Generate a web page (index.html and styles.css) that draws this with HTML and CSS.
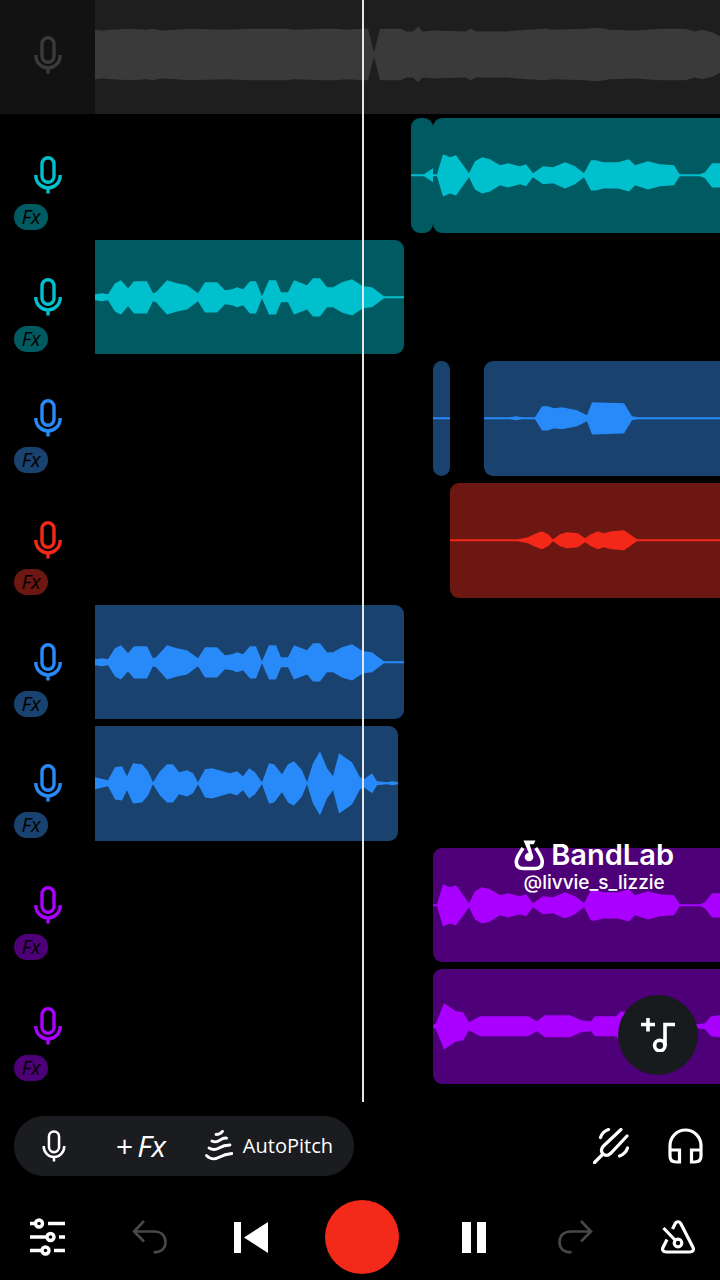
FILE: index.html
```html
<!DOCTYPE html>
<html lang="en">
<head>
    <meta charset="UTF-8">
    <meta name="viewport" content="width=device-width, initial-scale=1.0">
    <title>BandLab</title>
    <link rel="stylesheet" href="styles.css">
</head>
<body>
    <!-- Shared icons -->
    <svg class="icon-defs" width="0" height="0">
        <symbol id="mic" viewBox="0 0 28 38">
            <rect x="8" y="1.8" width="12" height="24.500" rx="6"/>
            <path d="M1.8 19v.5C1.8 27 8 32 14 32s12.2-5 12.2-12.5V19M14 32v5.5"/>
        </symbol>
        <symbol id="back" viewBox="0 0 35 34">
            <path d="M12 1 2 11.500l10 10M2 11.500h20c8 0 11.500 5 11.500 11 0 6-4.500 9.800-12 9.800"/>
        </symbol>
    </svg>

    <div class="studio">
        <main class="timeline">
            <div class="track muted">
                <div class="track-head">
                    <button class="mic-btn" aria-label="Track 1"><svg class="mic"><use href="#mic"/></svg></button>
                </div>
                <div class="lane">
                    <div class="clip backing"><svg data-wave="backing"></svg></div>
                </div>
            </div>

            <div class="tracks">
                <div class="track teal">
                    <div class="track-head">
                        <button class="mic-btn" aria-label="Track 2"><svg class="mic"><use href="#mic"/></svg></button>
                        <button class="fx-badge">Fx</button>
                    </div>
                    <div class="lane">
                        <div class="clip pickup"><svg data-wave="pickup"></svg></div>
                        <div class="clip chorus"><svg data-wave="chorus"></svg></div>
                    </div>
                </div>
                <div class="track teal">
                    <div class="track-head">
                        <button class="mic-btn" aria-label="Track 3"><svg class="mic"><use href="#mic"/></svg></button>
                        <button class="fx-badge">Fx</button>
                    </div>
                    <div class="lane">
                        <div class="clip verse"><svg data-wave="verse"></svg></div>
                    </div>
                </div>
                <div class="track blue">
                    <div class="track-head">
                        <button class="mic-btn" aria-label="Track 4"><svg class="mic"><use href="#mic"/></svg></button>
                        <button class="fx-badge">Fx</button>
                    </div>
                    <div class="lane">
                        <div class="clip sliver"><svg data-wave="sliver"></svg></div>
                        <div class="clip adlib"><svg data-wave="adlib"></svg></div>
                    </div>
                </div>
                <div class="track red">
                    <div class="track-head">
                        <button class="mic-btn" aria-label="Track 5"><svg class="mic"><use href="#mic"/></svg></button>
                        <button class="fx-badge">Fx</button>
                    </div>
                    <div class="lane">
                        <div class="clip whisper"><svg data-wave="whisper"></svg></div>
                    </div>
                </div>
                <div class="track blue">
                    <div class="track-head">
                        <button class="mic-btn" aria-label="Track 6"><svg class="mic"><use href="#mic"/></svg></button>
                        <button class="fx-badge">Fx</button>
                    </div>
                    <div class="lane">
                        <div class="clip verse"><svg data-wave="verse"></svg></div>
                    </div>
                </div>
                <div class="track blue">
                    <div class="track-head">
                        <button class="mic-btn" aria-label="Track 7"><svg class="mic"><use href="#mic"/></svg></button>
                        <button class="fx-badge">Fx</button>
                    </div>
                    <div class="lane">
                        <div class="clip double"><svg data-wave="double"></svg></div>
                    </div>
                </div>
                <div class="track purple">
                    <div class="track-head">
                        <button class="mic-btn" aria-label="Track 8"><svg class="mic"><use href="#mic"/></svg></button>
                        <button class="fx-badge">Fx</button>
                    </div>
                    <div class="lane">
                        <div class="clip harmony"><svg data-wave="chorus"></svg></div>
                    </div>
                </div>
                <div class="track purple">
                    <div class="track-head">
                        <button class="mic-btn" aria-label="Track 9"><svg class="mic"><use href="#mic"/></svg></button>
                        <button class="fx-badge">Fx</button>
                    </div>
                    <div class="lane">
                        <div class="clip harmony"><svg data-wave="harmony"></svg></div>
                    </div>
                </div>
            </div>

            <div class="playhead"></div>

            <div class="watermark">
                <div class="brand">
                    <svg width="31" height="31" viewBox="0 0 31 31">
                        <path d="M9 8C6 13 2.300 17 2.300 22c0 4 2.500 6.500 7 6.500h12c4.500 0 7-2.500 7-6.500 0-5-3.500-9-6.500-14" fill="none" stroke="#fff" stroke-width="3.600"/>
                        <path d="M9.500.5h12l-1.800 3.700h-4L19.300 17h-4l-.3-3.500z" fill="#fff"/>
                        <circle cx="15" cy="17" r="4.300" fill="#fff"/>
                    </svg>
                    <span>BandLab</span>
                </div>
                <div class="handle">@livvie_s_lizzie</div>
            </div>

            <button class="add-track" aria-label="Add track">
                <svg width="34" height="34" viewBox="0 0 34 34">
                    <path d="M0 6.500h14M7 0v13.500M34 6.500H24V28" stroke-width="3.600"/>
                    <circle cx="18.800" cy="27.500" r="5.200" stroke-width="3.600"/>
                </svg>
            </button>
        </main>

        <footer class="dock">
            <div class="tools">
                <div class="pill">
                    <button class="tool-mic" aria-label="Input"><svg class="mic-small"><use href="#mic"/></svg></button>
                    <button class="add-fx"><span>+</span><i>Fx</i></button>
                    <button class="autopitch">
                        <svg width="28" height="32" viewBox="0 0 28 32" stroke-width="2.800">
                            <path d="M11 4.500q4 0 6.500-3.200M7 11q4 2 8-.8t6.500-2M4 18q5 3 10 0t11-3M1.500 25.500q5.500 5.500 12 2T27 23.500"/>
                        </svg>
                        AutoPitch
                    </button>
                </div>
                <div class="extras">
                    <button aria-label="Tuner">
                        <svg width="36" height="36" viewBox="0 0 36 36" stroke-width="3.200">
                            <path d="M1.500 34.500 10 26M28 1.500 10.500 18c-3 3-2.500 5.500-.5 7.800 2.500 2.400 5 2 7.500-.3L34 8M7.500 9.500q2-6 8-8M34.500 20q-2 6-8 8"/>
                        </svg>
                    </button>
                    <button aria-label="Monitoring">
                        <svg width="35" height="36" viewBox="0 0 35 36" stroke-width="3.200">
                            <path d="M2 22v-4.500a15.500 15.500 0 0 1 31 0V22M2 22h9.500v12H8c-4 0-6-2-6-6zM33 22h-9.500v12H27c4 0 6-2 6-6z"/>
                        </svg>
                    </button>
                </div>
            </div>
            <div class="transport">
                <button aria-label="Mixer">
                    <svg width="35" height="38" viewBox="0 0 35 38" stroke-width="3.400">
                        <path d="M0 5.500h5M18 5.500h17M0 19h16M29 19h6M0 32.500h11M24 32.500h11"/>
                        <circle cx="9" cy="5.500" r="3.500"/>
                        <circle cx="20.500" cy="19" r="3.500"/>
                        <circle cx="15.500" cy="32.500" r="3.500"/>
                    </svg>
                </button>
                <button class="dim" aria-label="Undo"><svg width="35" height="34"><use href="#back"/></svg></button>
                <button aria-label="To start">
                    <svg class="solid" width="34" height="31" viewBox="0 0 34 31"><path d="M0 0h7v31H0zM10 15.500 34 0v31z"/></svg>
                </button>
                <button class="record" aria-label="Record"></button>
                <button aria-label="Pause">
                    <svg class="solid" width="24" height="31" viewBox="0 0 24 31"><path d="M0 0h9v31H0zM15 0h9v31h-9z"/></svg>
                </button>
                <button class="dim redo" aria-label="Redo"><svg width="35" height="34"><use href="#back"/></svg></button>
                <button aria-label="Metronome">
                    <svg width="34" height="34" viewBox="0 0 34 34" stroke-width="3.200">
                        <path d="M11.500 9 14 4c1.500-3 4.500-3 6 0l11.800 23c1.500 3 0 5-3 5H5.200c-3 0-4.500-2-3-5L6 19.500M2.500 8 14 20"/>
                        <circle cx="17" cy="23" r="3.800"/>
                    </svg>
                </button>
            </div>
        </footer>
    </div>

    <script>
        // Envelope of each clip: x, half height
        const waves = {
            backing: '0,26 8,25 18,26 35,27 52,26 58,27 66,25 80,26 95,27 130,26 155,27 190,27 200,26 225,27 240,27 252,26 268,27 273,27 279,2 285,27 305,27 312,24 318,24 323,29 328,24 340,25 370,24 376,27 381,24 410,24 432,26 450,27 458,26 490,27 503,28 515,26 540,25 565,27 590,27 600,24 607,26 618,23 625,19',
            pickup: '0,1 13,1 22,7',
            chorus: '0,1 4,1 10,21 17,18 23,20 36,2 42,14 49,18 57,16 67,10 75,12 87,9 93,11 100,2 110,9 120,8 132,13 142,9 151,2 158,15 163,15 170,13 185,13 196,16 202,10 215,14 227,11 241,10 246,2 247,1 267,1 272,3 279,12 287,12',
            verse: '0,3 7,4 13,3 20,14 26,17 33,9 39,16 52,16 58,4 61,5 72,17 82,14 92,12 103,4 110,15 122,15 130,7 137,8 142,10 148,8 155,16 161,16 167,1 174,17 181,17 186,5 193,5 199,17 212,12 218,19 225,19 232,10 238,10 247,15 257,18 268,11 277,10 289,1 309,1',
            sliver: '0,1 17,1',
            adlib: '0,1 26,1 32,2 38,1 51,1 58,12 64,12 70,10 78,11 93,8 99,5 103,3 108,16 140,15 148,2 154,1 236,1',
            whisper: '0,1 68,1 78,3 84,6 92,9 98,6 103,1 110,6 117,8 128,7 135,2 141,6 148,9 153,7 162,9 174,10 187,1 270,1',
            double: '0,6 13,3 20,16 27,17 32,7 38,20 47,19 53,12 58,1 65,12 72,19 78,19 84,11 92,13 98,10 103,1 110,14 117,15 135,10 142,12 148,7 154,15 160,11 167,1 174,20 179,19 187,9 193,19 199,22 207,13 212,1 218,20 225,32 232,15 238,7 244,30 257,21 265,6 269,4 277,10 282,2 292,1 297,2 303,1',
            harmony: '0,1 3,3 11,23 23,15 30,14 36,4 47,10 82,10 95,10 104,5 112,11 137,11 148,6 158,5 162,10 183,10 188,15 196,14 265,2 272,3 278,10 287,11'
        };

        document.querySelectorAll('[data-wave]').forEach(svg => {
            const points = waves[svg.dataset.wave].split(' ').map(p => p.split(',').map(Number));
            const top = points.map(([x, a]) => `${x},${57 - a}`);
            const bottom = points.map(([x, a]) => `${x},${57 + a}`).reverse();
            const width = points[points.length - 1][0];
            svg.setAttribute('viewBox', `0 0 ${width} 114`);
            svg.setAttribute('preserveAspectRatio', 'none');
            svg.innerHTML = `<polygon points="${top.concat(bottom).join(' ')}"/>`;
        });
    </script>
</body>
</html>
```
FILE: styles.css
```css
* {
    margin: 0;
    padding: 0;
    box-sizing: border-box;
}

body {
    background: #000;
    color: #fff;
    font-family: Lato, "Open Sans", sans-serif;
}

button {
    display: flex;
    align-items: center;
    justify-content: center;
    background: none;
    border: none;
    color: inherit;
    font: inherit;
    cursor: pointer;
}

svg {
    display: block;
    fill: none;
    stroke: currentColor;
}

.icon-defs {
    position: absolute;
}

.studio {
    display: flex;
    flex-direction: column;
    min-height: 100vh;
}

/* Timeline */
.timeline {
    position: relative;
    flex: 1;
    display: flex;
    flex-direction: column;
    gap: 4px;
    padding-bottom: 18px;
    overflow: hidden;
}

.tracks {
    flex: 1;
    display: grid;
    grid-auto-rows: 1fr;
    gap: 7px;
}

.track {
    display: flex;
    min-height: 114px;
}

.track-head {
    flex: 0 0 95px;
    display: flex;
    flex-direction: column;
    gap: 10px;
    padding-top: 38px;
}

.mic-btn {
    align-self: center;
    color: var(--wave);
}

.mic {
    width: 28px;
    height: 38px;
    stroke-width: 3.4px;
}

.fx-badge {
    width: 34px;
    height: 26px;
    margin-left: 14px;
    border-radius: 13px;
    background: var(--clip);
    color: #000;
    font: italic 500 20px/26px "Open Sans", sans-serif;
}

.lane {
    flex: 1;
    display: flex;
    min-width: 0;
    overflow: hidden;
}

.clip {
    flex: none;
    background: var(--clip);
    border-radius: 9px;
    overflow: hidden;
}

.clip svg {
    width: 100%;
    height: 100%;
    fill: var(--wave);
    stroke: none;
}

.teal {
    --clip: #005a61;
    --wave: #00c0cd;
}

.blue {
    --clip: #1a426f;
    --wave: #288af8;
}

.red {
    --clip: #6d1712;
    --wave: #f32819;
}

.purple {
    --clip: #4e0078;
    --wave: #a900ff;
}

.muted {
    --clip: #1e1e1e;
    --wave: #3a3a3a;
    flex: 0 0 114px;
    background: #121212;
}

.muted .track-head {
    padding-top: 36px;
}

.muted .clip {
    border-radius: 0;
}

.muted .clip svg {
    height: 109px;
}

/* Clip lengths and starts on the time scale */
.backing {
    width: 100%;
}

.pickup {
    width: 22px;
    margin-left: 316px;
}

.chorus {
    width: 287px;
    border-radius: 9px 0 0 9px;
}

.verse {
    width: 309px;
    border-radius: 0 9px 9px 0;
}

.sliver {
    width: 17px;
    margin-left: 338px;
}

.adlib {
    width: 236px;
    margin-left: 34px;
    border-radius: 9px 0 0 9px;
}

.whisper {
    width: 270px;
    margin-left: 355px;
    border-radius: 9px 0 0 9px;
}

.double {
    width: 303px;
    border-radius: 0 9px 9px 0;
}

.harmony {
    width: 287px;
    margin-left: 338px;
    border-radius: 9px 0 0 9px;
}

.playhead {
    position: absolute;
    top: 0;
    bottom: 0;
    left: 362px;
    width: 2px;
    background: #e6e6e6;
}

.watermark {
    position: absolute;
    right: 46px;
    bottom: 207px;
    display: flex;
    flex-direction: column;
    align-items: center;
    font-family: Inter, sans-serif;
}

.brand {
    display: flex;
    align-items: center;
    gap: 6px;
    font-size: 29px;
    font-weight: 600;
    line-height: 32px;
}

.brand svg {
    stroke: none;
}

.handle {
    font-size: 19px;
    font-weight: 500;
    line-height: 24px;
}

.add-track {
    position: absolute;
    right: 22px;
    bottom: 27px;
    width: 80px;
    height: 80px;
    border-radius: 50%;
    background: #181b1e;
}

/* Bottom dock */
.dock {
    display: flex;
    flex-direction: column;
    gap: 24px;
    padding: 14px 14px 6px;
}

.tools {
    display: flex;
    align-items: center;
    justify-content: space-between;
}

.pill {
    display: flex;
    align-items: center;
    justify-content: space-between;
    width: 340px;
    height: 60px;
    padding: 0 21px 0 28px;
    border-radius: 30px;
    background: #1b1c20;
}

.mic-small {
    width: 24px;
    height: 32px;
    stroke-width: 3px;
}

.add-fx {
    gap: 4px;
    margin-left: 11px;
    font: 500 30px/40px "Open Sans", sans-serif;
}

.autopitch {
    gap: 10px;
    font: 500 20px/32px "Open Sans", sans-serif;
}

.extras {
    display: flex;
    gap: 39px;
    padding-right: 3px;
}

.extras svg,
.autopitch svg {
    stroke-linecap: round;
}

.transport {
    display: flex;
    align-items: center;
    justify-content: space-between;
    padding-left: 5px;
}

.transport button {
    width: 56px;
    height: 56px;
}

.transport .record {
    width: 74px;
    height: 74px;
    border-radius: 50%;
    background: #f32a1a;
}

.solid {
    fill: #fff;
    stroke: none;
}

.dim {
    color: #484848;
    stroke-width: 2.6px;
}

.redo svg {
    transform: scaleX(-1);
}
```
